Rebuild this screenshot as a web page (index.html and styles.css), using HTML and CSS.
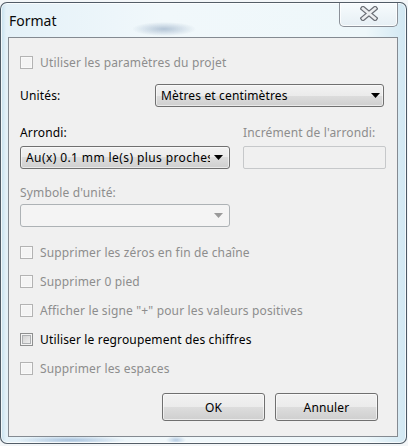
FILE: index.html
```html
<!DOCTYPE html>
<html lang="fr">
<head>
<meta charset="utf-8">
<title>Format</title>
<link rel="stylesheet" href="styles.css">
</head>
<body>
<div class="window">
  <div class="titlebar">
    <span class="title">Format</span>
    <div class="close">
      <svg width="18" height="15" viewBox="0 0 18 15">
        <g stroke-linecap="square">
          <line x1="3" y1="2.5" x2="15" y2="12.5" stroke="#6a6e75" stroke-width="5"/>
          <line x1="15" y1="2.5" x2="3" y2="12.5" stroke="#6a6e75" stroke-width="5"/>
          <line x1="3" y1="2.5" x2="15" y2="12.5" stroke="#eceef0" stroke-width="2.6"/>
          <line x1="15" y1="2.5" x2="3" y2="12.5" stroke="#eceef0" stroke-width="2.6"/>
        </g>
      </svg>
    </div>
  </div>
  <div class="client">
    <div class="check-row first disabled"><span class="cb"></span><span>Utiliser les paramètres du projet</span></div>

    <div class="units-row">
      <span class="lbl">Unités:</span>
      <div class="combo combo-units"><span class="combo-text">Mètres et centimètres</span><svg class="arrow" width="9" height="5" viewBox="0 0 9 5"><polygon points="0,0 9,0 4.5,5" fill="#000"/></svg></div>
    </div>

    <div class="round-grid">
      <span class="lbl">Arrondi:</span>
      <span class="lbl disabled">Incrément de l'arrondi:</span>
      <div class="combo combo-round"><span class="combo-text">Au(x) 0.1 mm le(s) plus proches</span><svg class="arrow" width="9" height="5" viewBox="0 0 9 5"><polygon points="0,0 9,0 4.5,5" fill="#000"/></svg></div>
      <div class="textbox"></div>
    </div>

    <span class="lbl disabled sym-label">Symbole d'unité:</span>
    <div class="combo combo-disabled"><span class="combo-text"></span><svg class="arrow" width="9" height="5" viewBox="0 0 9 5"><polygon points="0,0 9,0 4.5,5" fill="#9a9a9a"/></svg></div>

    <div class="checks">
      <div class="check-row disabled"><span class="cb"></span><span>Supprimer les zéros en fin de chaîne</span></div>
      <div class="check-row disabled"><span class="cb"></span><span>Supprimer 0 pied</span></div>
      <div class="check-row disabled"><span class="cb"></span><span>Afficher le signe "+" pour les valeurs positives</span></div>
      <div class="check-row enabled"><span class="cb"></span><span>Utiliser le regroupement des chiffres</span></div>
      <div class="check-row disabled"><span class="cb"></span><span>Supprimer les espaces</span></div>
    </div>

    <div class="buttons">
      <div class="btn">OK</div>
      <div class="btn">Annuler</div>
    </div>
  </div>
</div>
</body>
</html>
```
FILE: styles.css
```css
html, body {
  margin: 0;
  padding: 0;
}
body {
  width: 408px;
  height: 446px;
  overflow: hidden;
  background: #f3f6f8;
  font-family: "Noto Sans", "DejaVu Sans", sans-serif;
  font-size: 12px;
  letter-spacing: 0.15px;
  color: #000;
}
.window {
  box-sizing: border-box;
  width: 407px;
  height: 442px;
  margin-top: 2px;
  border: 1px solid rgba(45, 55, 66, 0.8);
  border-radius: 7px;
  padding: 0 8px 6px 7px;
  display: flex;
  flex-direction: column;
  background:
    radial-gradient(ellipse 32px 7px at 163px 26px, rgba(105, 135, 170, 0.45), rgba(105, 135, 170, 0)),
    radial-gradient(ellipse 55px 4px at 70px 437px, rgba(70, 120, 180, 0.4), rgba(70, 120, 180, 0)),
    radial-gradient(ellipse 10px 4px at 175px 437px, rgba(70, 120, 180, 0.35), rgba(70, 120, 180, 0)),
    linear-gradient(to right, #c4e0ee 0, #e4f1f8 5px, #f1f8fb 40%, #eef7fa 90%, #d2e8f3 100%);
  box-shadow: inset 0 0 0 1px rgba(255, 255, 255, 0.75);
}
.titlebar {
  height: 34px;
  flex: none;
  display: flex;
  justify-content: space-between;
  align-items: flex-start;
}
.title {
  margin: 8px 0 0 1px;
  font-size: 14px;
  line-height: 20px;
  letter-spacing: 0;
  color: #0a0a0a;
}
.close {
  box-sizing: border-box;
  width: 59px;
  height: 24px;
  border: 1px solid #8b9098;
  border-top: none;
  border-radius: 0 0 5px 5px;
  background: linear-gradient(#f7fbfd, #e6eff4);
  box-shadow: inset 0 0 0 1px rgba(255, 255, 255, 0.8);
  display: flex;
  justify-content: center;
  align-items: center;
  padding-bottom: 2px;
}
.client {
  flex: 1;
  box-sizing: border-box;
  border: 1px solid #848a91;
  background: #f0f0f0;
  padding: 14px 11px 0 11px;
  display: flex;
  flex-direction: column;
}
.disabled {
  color: #8d8d8d;
}
.lbl {
  line-height: 16px;
  height: 16px;
}
.check-row {
  display: flex;
  align-items: center;
  height: 29px;
  white-space: nowrap;
}
.check-row.first {
  height: 20px;
}
.cb {
  box-sizing: border-box;
  width: 13px;
  height: 13px;
  flex: none;
  margin-right: 7px;
  border: 1px solid #b3b3b3;
  background: #f4f4f4;
  box-shadow: inset 0 0 0 1px #f9f9f9;
}
.enabled .cb {
  border-color: #8e8f8f;
  background: linear-gradient(135deg, #cbcbcb, #f6f6f6);
  box-shadow: inset 0 0 0 1px #f4f4f4, inset 0 0 0 2px #aeb0b2;
}
.units-row {
  margin-top: 12px;
  display: flex;
  align-items: center;
  height: 23px;
}
.combo {
  box-sizing: border-box;
  height: 23px;
  border: 1px solid #707070;
  border-radius: 3px;
  background: linear-gradient(#f2f2f2 0, #ebebeb 50%, #dddddd 50%, #cfcfcf 100%);
  box-shadow: inset 0 0 0 1px rgba(255, 255, 255, 0.55);
  display: flex;
  align-items: center;
  padding-left: 5px;
}
.combo-text {
  flex: 1;
  overflow: hidden;
  white-space: nowrap;
}
.combo-units {
  width: 229px;
  margin-left: auto;
  margin-right: 2px;
  padding-right: 3px;
}
.combo-round {
  width: 210px;
  padding-right: 6px;
}
.combo-round .combo-text {
  margin-right: 4px;
  letter-spacing: 0.4px;
}
.round-grid {
  margin-top: 18px;
  display: grid;
  grid-template-columns: 210px 143px;
  column-gap: 13px;
  row-gap: 5px;
}
.textbox {
  box-sizing: border-box;
  height: 23px;
  border: 1px solid #c6c8ca;
  border-radius: 2px;
  background: #f0f0f0;
}
.sym-label {
  margin-top: 16px;
}
.combo-disabled {
  margin-top: 3px;
  width: 210px;
  border-color: #adb2b5;
  background: #f4f4f4;
  box-shadow: none;
  padding-right: 6px;
}
.checks {
  margin-top: 11px;
  display: flex;
  flex-direction: column;
}
.buttons {
  margin-top: 10px;
  display: flex;
  justify-content: flex-end;
  gap: 10px;
  padding-right: 8px;
}
.btn {
  box-sizing: border-box;
  width: 103px;
  height: 28px;
  border: 1px solid #707070;
  border-radius: 3px;
  background: linear-gradient(#f2f2f2 0, #ebebeb 50%, #dddddd 50%, #cfcfcf 100%);
  box-shadow: inset 0 0 0 1px rgba(255, 255, 255, 0.6);
  display: flex;
  align-items: center;
  justify-content: center;
  color: #000;
}
```
